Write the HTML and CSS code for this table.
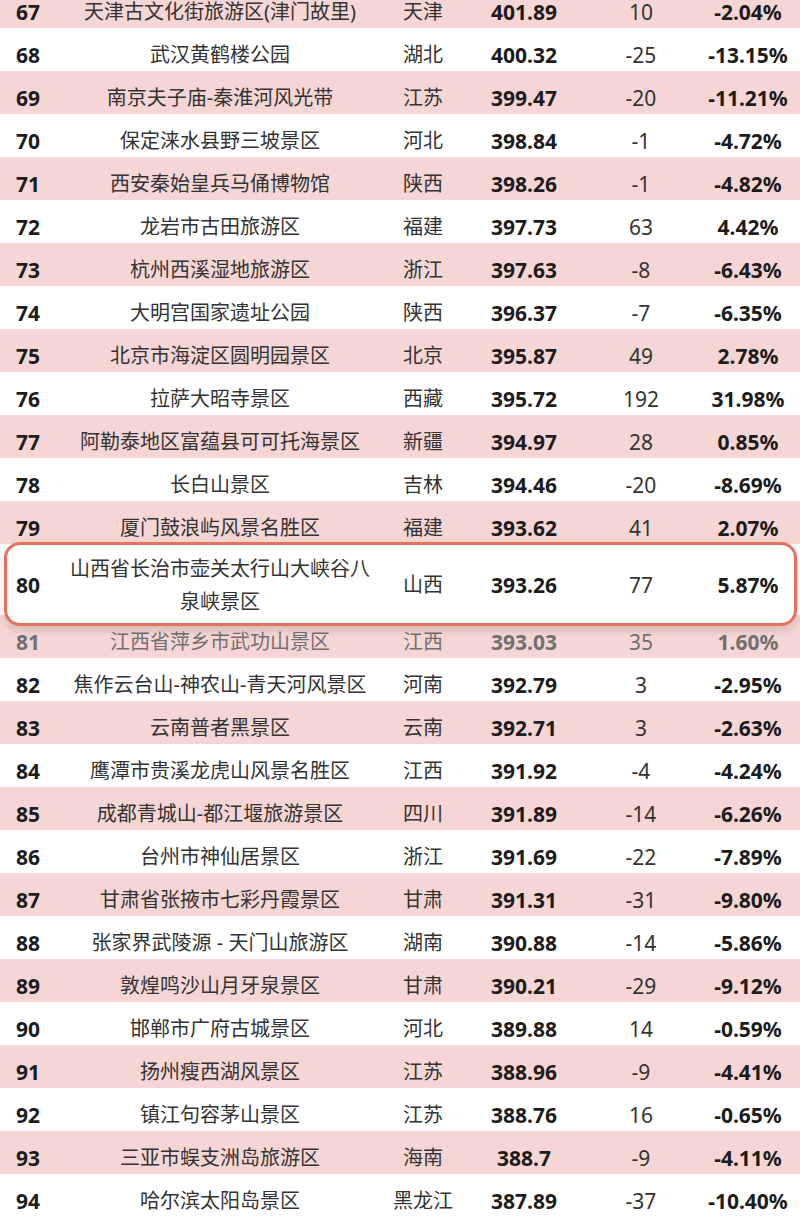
FILE: index.html
```html
<!DOCTYPE html>
<html lang="zh-CN">
<head>
<meta charset="utf-8">
<title>景区排行</title>
<link rel="stylesheet" href="styles.css">
</head>
<body>
<div class="table">
  <div class="row pink first"><span class="rank">67</span><span class="name">天津古文化街旅游区(津门故里)</span><span class="prov">天津</span><span class="score">401.89</span><span class="chg">10</span><span class="pct">-2.04%</span></div>
  <div class="row"><span class="rank">68</span><span class="name">武汉黄鹤楼公园</span><span class="prov">湖北</span><span class="score">400.32</span><span class="chg">-25</span><span class="pct">-13.15%</span></div>
  <div class="row pink"><span class="rank">69</span><span class="name">南京夫子庙-秦淮河风光带</span><span class="prov">江苏</span><span class="score">399.47</span><span class="chg">-20</span><span class="pct">-11.21%</span></div>
  <div class="row"><span class="rank">70</span><span class="name">保定涞水县野三坡景区</span><span class="prov">河北</span><span class="score">398.84</span><span class="chg">-1</span><span class="pct">-4.72%</span></div>
  <div class="row pink"><span class="rank">71</span><span class="name">西安秦始皇兵马俑博物馆</span><span class="prov">陕西</span><span class="score">398.26</span><span class="chg">-1</span><span class="pct">-4.82%</span></div>
  <div class="row"><span class="rank">72</span><span class="name">龙岩市古田旅游区</span><span class="prov">福建</span><span class="score">397.73</span><span class="chg">63</span><span class="pct">4.42%</span></div>
  <div class="row pink"><span class="rank">73</span><span class="name">杭州西溪湿地旅游区</span><span class="prov">浙江</span><span class="score">397.63</span><span class="chg">-8</span><span class="pct">-6.43%</span></div>
  <div class="row"><span class="rank">74</span><span class="name">大明宫国家遗址公园</span><span class="prov">陕西</span><span class="score">396.37</span><span class="chg">-7</span><span class="pct">-6.35%</span></div>
  <div class="row pink"><span class="rank">75</span><span class="name">北京市海淀区圆明园景区</span><span class="prov">北京</span><span class="score">395.87</span><span class="chg">49</span><span class="pct">2.78%</span></div>
  <div class="row"><span class="rank">76</span><span class="name">拉萨大昭寺景区</span><span class="prov">西藏</span><span class="score">395.72</span><span class="chg">192</span><span class="pct">31.98%</span></div>
  <div class="row pink"><span class="rank">77</span><span class="name">阿勒泰地区富蕴县可可托海景区</span><span class="prov">新疆</span><span class="score">394.97</span><span class="chg">28</span><span class="pct">0.85%</span></div>
  <div class="row"><span class="rank">78</span><span class="name">长白山景区</span><span class="prov">吉林</span><span class="score">394.46</span><span class="chg">-20</span><span class="pct">-8.69%</span></div>
  <div class="row pink"><span class="rank">79</span><span class="name">厦门鼓浪屿风景名胜区</span><span class="prov">福建</span><span class="score">393.62</span><span class="chg">41</span><span class="pct">2.07%</span></div>
  <div class="row highlight"><span class="rank">80</span><span class="name">山西省长治市壶关太行山大峡谷八<br>泉峡景区</span><span class="prov">山西</span><span class="score">393.26</span><span class="chg">77</span><span class="pct">5.87%</span></div>
  <div class="row pink dim"><span class="rank">81</span><span class="name">江西省萍乡市武功山景区</span><span class="prov">江西</span><span class="score">393.03</span><span class="chg">35</span><span class="pct">1.60%</span></div>
  <div class="row"><span class="rank">82</span><span class="name">焦作云台山-神农山-青天河风景区</span><span class="prov">河南</span><span class="score">392.79</span><span class="chg">3</span><span class="pct">-2.95%</span></div>
  <div class="row pink"><span class="rank">83</span><span class="name">云南普者黑景区</span><span class="prov">云南</span><span class="score">392.71</span><span class="chg">3</span><span class="pct">-2.63%</span></div>
  <div class="row"><span class="rank">84</span><span class="name">鹰潭市贵溪龙虎山风景名胜区</span><span class="prov">江西</span><span class="score">391.92</span><span class="chg">-4</span><span class="pct">-4.24%</span></div>
  <div class="row pink"><span class="rank">85</span><span class="name">成都青城山-都江堰旅游景区</span><span class="prov">四川</span><span class="score">391.89</span><span class="chg">-14</span><span class="pct">-6.26%</span></div>
  <div class="row"><span class="rank">86</span><span class="name">台州市神仙居景区</span><span class="prov">浙江</span><span class="score">391.69</span><span class="chg">-22</span><span class="pct">-7.89%</span></div>
  <div class="row pink"><span class="rank">87</span><span class="name">甘肃省张掖市七彩丹霞景区</span><span class="prov">甘肃</span><span class="score">391.31</span><span class="chg">-31</span><span class="pct">-9.80%</span></div>
  <div class="row"><span class="rank">88</span><span class="name">张家界武陵源 - 天门山旅游区</span><span class="prov">湖南</span><span class="score">390.88</span><span class="chg">-14</span><span class="pct">-5.86%</span></div>
  <div class="row pink"><span class="rank">89</span><span class="name">敦煌鸣沙山月牙泉景区</span><span class="prov">甘肃</span><span class="score">390.21</span><span class="chg">-29</span><span class="pct">-9.12%</span></div>
  <div class="row"><span class="rank">90</span><span class="name">邯郸市广府古城景区</span><span class="prov">河北</span><span class="score">389.88</span><span class="chg">14</span><span class="pct">-0.59%</span></div>
  <div class="row pink"><span class="rank">91</span><span class="name">扬州瘦西湖风景区</span><span class="prov">江苏</span><span class="score">388.96</span><span class="chg">-9</span><span class="pct">-4.41%</span></div>
  <div class="row"><span class="rank">92</span><span class="name">镇江句容茅山景区</span><span class="prov">江苏</span><span class="score">388.76</span><span class="chg">16</span><span class="pct">-0.65%</span></div>
  <div class="row pink"><span class="rank">93</span><span class="name">三亚市蜈支洲岛旅游区</span><span class="prov">海南</span><span class="score">388.7</span><span class="chg">-9</span><span class="pct">-4.11%</span></div>
  <div class="row"><span class="rank">94</span><span class="name">哈尔滨太阳岛景区</span><span class="prov">黑龙江</span><span class="score">387.89</span><span class="chg">-37</span><span class="pct">-10.40%</span></div>
</div>
</body>
</html>
```

FILE: styles.css
```css
html, body {
  margin: 0;
  padding: 0;
  background: #ffffff;
}

body {
  width: 800px;
  height: 1216px;
  overflow: hidden;
  font-family: "Noto Sans", "Noto Sans CJK SC", sans-serif;
  color: #2a2a2a;
}

.table {
  display: flex;
  flex-direction: column;
}

.row {
  display: grid;
  grid-template-columns: 56px 328px 78px 124px 110px 104px;
  align-items: end;
  height: 43px;
  box-sizing: border-box;
  padding-bottom: 4px;
  text-align: center;
  line-height: 24px;
  background: #ffffff;
}

.row.first {
  margin-top: -15px;
}

.row.pink {
  background: #f6d6d4;
}

.rank {
  font-size: 21px;
  font-weight: 700;
  color: #1c1c1c;
}

.name,
.prov {
  font-size: 20px;
  color: #333333;
  white-space: nowrap;
}

.score {
  font-size: 21px;
  font-weight: 700;
  color: #1c1c1c;
}

.chg {
  font-size: 21px;
  color: #333333;
}

.pct {
  font-size: 21px;
  font-weight: 700;
  color: #1c1c1c;
}

.row.highlight {
  position: relative;
  z-index: 2;
  height: 71px;
  padding-top: 8px;
  padding-bottom: 0;
  align-items: center;
  background: transparent;
}

.row.highlight::before {
  content: "";
  position: absolute;
  top: -2px;
  bottom: -11px;
  left: 4px;
  right: 3px;
  background: #ffffff;
  border: 3px solid #e6725e;
  border-radius: 16px;
  box-shadow: 0 4px 8px rgba(80, 40, 40, 0.18);
  z-index: -1;
}

.row.highlight .name {
  line-height: 33px;
}

.row.dim span {
  color: #707070;
}
```
